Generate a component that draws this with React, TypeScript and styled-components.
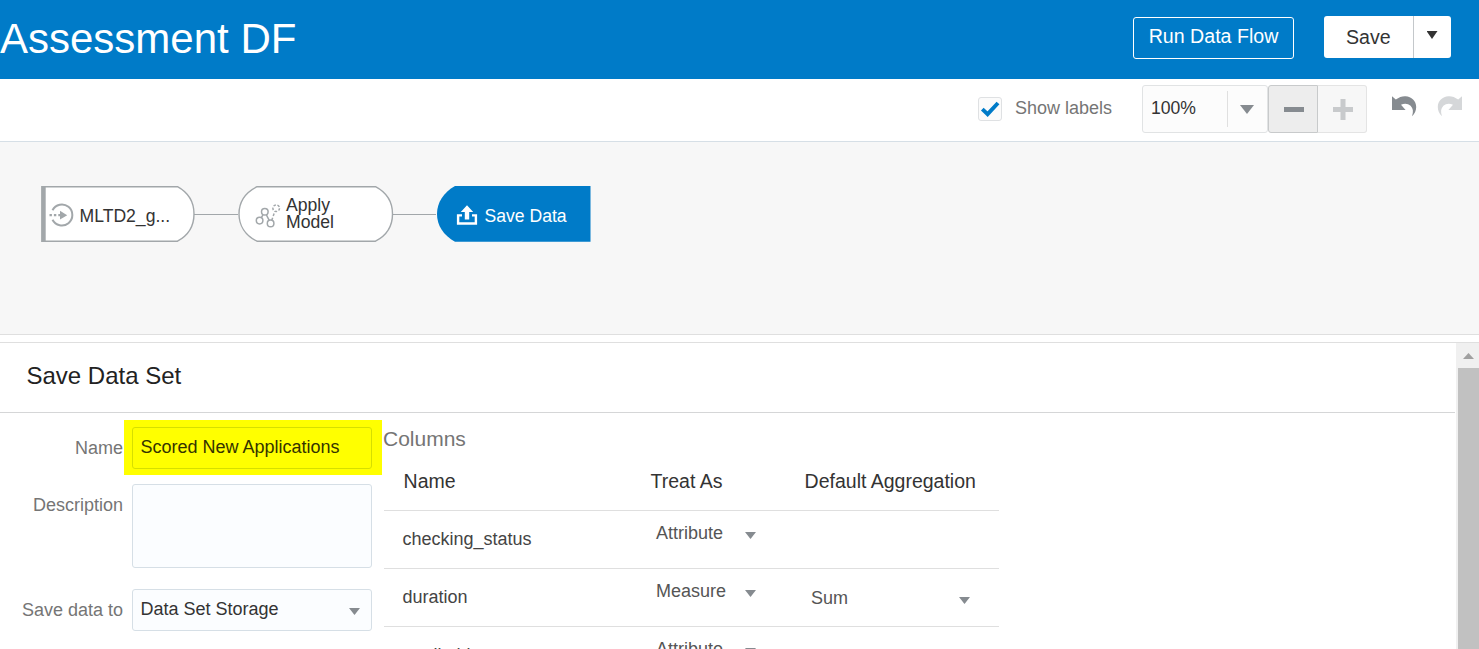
import React from "react";
import styled, { createGlobalStyle } from "styled-components";

const Global = createGlobalStyle`
  * { box-sizing: border-box; }
  body { margin: 0; overflow: hidden; background: #fff; font-family: "Liberation Sans", Arial, sans-serif; }
`;

const Page = styled.div`
  width: 1479px;
  height: 649px;
  overflow: hidden;
  display: flex;
  flex-direction: column;
  font-size: 18px;
  color: #333;
  white-space: nowrap;
`;

const Header = styled.header`
  flex: none;
  height: 79px;
  background: #007bc8;
  display: flex;
  justify-content: space-between;
  align-items: flex-start;
  padding-right: 28px;
`;

const Title = styled.h1`
  margin: 0;
  font-size: 42px;
  font-weight: 400;
  line-height: 77px;
  color: #fff;
`;

const Actions = styled.div`
  display: flex;
  align-items: flex-start;
  gap: 30px;
  padding-top: 16px;
`;

const RunButton = styled.button`
  width: 161px;
  height: 42px;
  margin: 1px 0 0;
  padding: 0 0 4px;
  border: 1px solid #fff;
  border-radius: 3px;
  background: none;
  color: #fff;
  font: 19.6px "Liberation Sans", Arial, sans-serif;
`;

const SplitButton = styled.div`
  display: flex;
  width: 127px;
  height: 42px;
  background: #fff;
  border-radius: 3px;
`;

const SaveLabel = styled.span`
  width: 90px;
  padding-left: 22px;
  border-right: 1px solid #c4c8cb;
  font-size: 19.6px;
  line-height: 42px;
`;

const SaveMenu = styled.span`
  flex: 1;
  display: flex;
  justify-content: center;
  padding: 15px 1px 0 0;
`;

const Arrow = styled.i<{ $w: number; $h: number; $color?: string }>`
  flex: none;
  display: block;
  width: ${(p) => p.$w}px;
  height: ${(p) => p.$h}px;
  background: ${(p) => p.$color || "#868b90"};
  clip-path: polygon(0 0, 100% 0, 50% 100%);
`;

const Toolbar = styled.div`
  flex: none;
  height: 63px;
  border-bottom: 1px solid #d6dfe6;
  display: flex;
  justify-content: flex-end;
  align-items: flex-start;
  padding: 6px 16px 0 0;
`;

const CheckBox = styled.span`
  display: flex;
  width: 24px;
  height: 24px;
  margin-top: 12px;
  border: 1px solid #dfe1e3;
  border-radius: 3px;
  background: #fbfbfb;
`;

const CheckLabel = styled.label`
  width: 127px;
  margin-left: 13px;
  line-height: 46px;
  color: #757575;
`;

const ZoomSelect = styled.div`
  display: flex;
  width: 126px;
  height: 48px;
  border: 1px solid #e1e3e4;
  border-radius: 3px;
  background: #fcfcfc;
`;

const ZoomValue = styled.span`
  width: 85px;
  height: 36px;
  margin-top: 5px;
  padding-left: 8px;
  border-right: 1px solid #e0e0e0;
  line-height: 34px;
  font-size: 17.6px;
`;

const ZoomMenu = styled.span`
  padding: 19px 0 0 12px;
`;

const ZoomButton = styled.button<{ $disabled?: boolean }>`
  display: flex;
  width: ${(p) => (p.$disabled ? 49 : 50)}px;
  height: 48px;
  padding: 0;
  border: 1px solid ${(p) => (p.$disabled ? "#e4e4e4" : "#c8cacb")};
  border-left-width: ${(p) => (p.$disabled ? 0 : 1)}px;
  border-radius: ${(p) => (p.$disabled ? "0 3px 3px 0" : "3px 0 0 3px")};
  background: ${(p) => (p.$disabled ? "#f7f7f7" : "#ededed")};
`;

const History = styled.div`
  display: flex;
  gap: 20px;
  margin: 10px 0 0 24px;
`;

const Canvas = styled.section`
  flex: none;
  height: 193px;
  display: flex;
  align-items: flex-start;
  padding: 43px 0 0 40px;
  background: #f7f7f7;
  border-bottom: 1px solid #dfdfdf;
`;

const Node = styled.div<{ $w: number; $light?: boolean }>`
  position: relative;
  display: flex;
  width: ${(p) => p.$w}px;
  height: 58px;
  font-size: 17.6px;
  color: ${(p) => (p.$light ? "#fff" : "#333")};
`;

const NodeShape = styled.svg`
  position: absolute;
  inset: 0;
`;

const NodeLabel = styled.span<{ $x: number; $y: number; $lh: number }>`
  position: absolute;
  left: ${(p) => p.$x}px;
  top: ${(p) => p.$y}px;
  line-height: ${(p) => p.$lh}px;
  white-space: pre;
`;

const Link = styled.div<{ $w: number }>`
  width: ${(p) => p.$w}px;
  height: 1px;
  margin-top: 29px;
  background: #a2a7aa;
`;

const Panel = styled.section`
  flex: 1;
  min-height: 0;
  display: flex;
  margin-top: 7px;
  border-top: 1px solid #dfdfdf;
`;

const PanelBody = styled.div`
  width: 1455px;
  margin-right: 1px;
`;

const PanelTitle = styled.h2`
  height: 70px;
  margin: 0;
  padding-left: 26.5px;
  border-bottom: 1px solid #d5d6d7;
  font-size: 24px;
  font-weight: 400;
  line-height: 66px;
  color: #222;
`;

const Columns = styled.div`
  display: flex;
  align-items: flex-start;
`;

const Form = styled.div`
  width: 382px;
  padding-top: 14px;
`;

const Field = styled.div<{ $gap: number }>`
  display: flex;
  margin-bottom: ${(p) => p.$gap}px;
`;

const FieldLabel = styled.label`
  width: 123px;
  margin-right: 1px;
  padding-top: 1px;
  text-align: right;
  line-height: 40px;
  color: #757575;
`;

const Highlight = styled.div<{ $on?: boolean }>`
  width: 258px;
  padding: ${(p) => (p.$on ? "7px 10px 6px 8px" : "0 10px 0 8px")};
  margin: ${(p) => (p.$on ? "-7px 0 -6px" : "0")};
  background: ${(p) => (p.$on ? "#ff0" : "none")};
`;

const Box = styled.div<{ $h: number; $on?: boolean }>`
  display: flex;
  justify-content: space-between;
  width: 240px;
  height: ${(p) => p.$h}px;
  padding: 0 11px 0 7.5px;
  border: 1px solid ${(p) => (p.$on ? "#d6df00" : "#d6dfe6")};
  border-radius: 3px;
  background: ${(p) => (p.$on ? "#ff0" : "#fbfdff")};
  color: ${(p) => (p.$on ? "#333300" : "#333")};
  line-height: 38px;
`;

const Down = styled.span<{ $y: number }>`
  padding-top: ${(p) => p.$y}px;
`;

const TableArea = styled.div`
  width: 617px;
  padding-left: 2px;
`;

const TableTitle = styled.h3`
  margin: 0;
  height: 45px;
  margin-left: -1px;
  font-size: 21px;
  font-weight: 400;
  line-height: 52px;
  color: #757575;
`;

const HeadRow = styled.div`
  display: flex;
  height: 53px;
  border-bottom: 1px solid #dfdfdf;
  padding-left: 19.6px;
  font-size: 19.5px;
  line-height: 46px;
  color: #333;
`;

const Row = styled.div`
  display: flex;
  height: 58px;
  border-bottom: 1px solid #dfdfdf;
  padding-left: 18.5px;
`;

const Cell = styled.span<{ $w: number }>`
  width: ${(p) => p.$w}px;
`;

const RowName = styled(Cell)`
  line-height: 56px;
  color: #444;
`;

const RowSelect = styled.span<{ $w: number; $y: number }>`
  display: flex;
  justify-content: space-between;
  width: ${(p) => p.$w}px;
  height: 44px;
  margin-top: ${(p) => p.$y}px;
  line-height: 44px;
  color: #555;
`;

const Scrollbar = styled.div`
  display: flex;
  flex-direction: column;
  width: 23px;
  background: #f0f0f0;
`;

const ScrollUp = styled.div`
  height: 25px;
  padding: 10px 0 0 7px;
`;

const Thumb = styled.div`
  flex: 1;
  margin-left: 2px;
  background: #c1c1c1;
`;

const rows = [
  { name: "checking_status", treat: "Attribute" },
  { name: "duration", treat: "Measure", agg: "Sum" },
  { name: "credit_history", treat: "Attribute" },
];

const UndoIcon = ({ flip }: { flip?: boolean }) => (
  <svg width="26" height="22" viewBox="0 0 26 22">
    <path
      transform={flip ? "translate(26 0) scale(-1 1)" : undefined}
      fill={flip ? "#d5d7d9" : "#868b90"}
      d="M1 1.2 L4.8 4.6 C8 2 11.5 1 14.5 1.2 C20.5 1.5 25.2 5.8 25.2 12 C25.2 15.6 23.8 18.6 21 21.2 C22.6 17 22.2 13.4 19.6 10.8 C17 8.3 13.2 8 10 9.8 L14.6 15 H1 Z"
    />
  </svg>
);

export default function App() {
  return (
    <Page>
      <Global />
      <Header>
        <Title>Assessment DF</Title>
        <Actions>
          <RunButton>Run Data Flow</RunButton>
          <SplitButton>
            <SaveLabel>Save</SaveLabel>
            <SaveMenu><Arrow $w={11} $h={8} $color="#333" /></SaveMenu>
          </SplitButton>
        </Actions>
      </Header>

      <Toolbar>
        <CheckBox>
          <svg width="22" height="22" viewBox="0 0 22 22">
            <path d="M3.3 11.2 L8.6 16.2 L19 5" fill="none" stroke="#007bc8" strokeWidth="3.9" />
          </svg>
        </CheckBox>
        <CheckLabel>Show labels</CheckLabel>
        <ZoomSelect>
          <ZoomValue>100%</ZoomValue>
          <ZoomMenu><Arrow $w={14} $h={9} /></ZoomMenu>
        </ZoomSelect>
        <ZoomButton>
          <svg width="48" height="46"><path d="M15 21h20v5H15z" fill="#868b90" /></svg>
        </ZoomButton>
        <ZoomButton $disabled>
          <svg width="48" height="46"><path d="M15 21h7.5v-8h5v8H35v5h-7.5v8h-5v-8H15z" fill="#c8cacc" /></svg>
        </ZoomButton>
        <History>
          <UndoIcon />
          <UndoIcon flip />
        </History>
      </Toolbar>

      <Canvas>
        <Node $w={154}>
          <NodeShape width="156" height="58" viewBox="40 185 156 58">
            <path d="M42 186.7 H177.5 C188 192.5 194 202.5 194 214 C194 225.5 188 235.5 177.5 241.2 H42" fill="#fff" stroke="#a2a7aa" strokeWidth="1.4" />
            <path d="M43.4 186 V242" stroke="#a2a7aa" strokeWidth="4.6" />
            <path d="M52.5 210.2 A10.5 10.5 0 1 1 52.5 219.8" fill="none" stroke="#a2a7aa" strokeWidth="2" />
            <path d="M49.5 215.2 H60" stroke="#a2a7aa" strokeWidth="2.2" strokeDasharray="2.4 2" />
            <path d="M60 210.8 L67.2 215.2 L60 219.6 Z" fill="#a2a7aa" />
          </NodeShape>
          <NodeLabel $x={39.5} $y={20} $lh={22}>MLTD2_g...</NodeLabel>
        </Node>
        <Link $w={44} />
        <Node $w={154}>
          <NodeShape width="156" height="58" viewBox="238 185 156 58">
            <path d="M257 186.7 H375.5 C386.5 192.5 392.5 202.5 392.5 214 C392.5 225.5 386.5 235.5 375.5 241.2 H257 C245.5 235.5 239 225.5 239 214 C239 202.5 245.5 192.5 257 186.7 Z" fill="#fff" stroke="#a2a7aa" strokeWidth="1.4" />
            <g fill="none" stroke="#a2a7aa" strokeWidth="1.5">
              <circle cx="259.6" cy="220.6" r="3.3" />
              <circle cx="264.8" cy="211.8" r="3.3" />
              <circle cx="270.6" cy="223.4" r="3.3" />
              <path d="M261.3 217.6 L263 214.8 M266.4 214.8 L269.2 220.3" />
              <path d="M271.8 220.2 L274.8 211.5" strokeDasharray="2.6 1.8" />
              <circle cx="276.2" cy="208.2" r="3.3" strokeDasharray="2.5 1.6" />
            </g>
          </NodeShape>
          <NodeLabel $x={48} $y={11.5} $lh={17}>{"Apply\nModel"}</NodeLabel>
        </Node>
        <Link $w={44} />
        <Node $w={154} $light>
          <NodeShape width="156" height="58" viewBox="436 185 156 58">
            <path d="M455 186 H590.5 V241.7 H455 C443.5 235.5 437 225.5 437 214 C437 202.5 443.5 192.5 455 186 Z" fill="#007bc8" />
            <path d="M462 215.4 H458.1 V223.5 H475.9 V215.4 H472" fill="none" stroke="#fff" strokeWidth="2.4" />
            <path d="M467 205.2 L473.2 212 H469.2 V219.5 H464.8 V212 H460.8 Z" fill="#fff" />
          </NodeShape>
          <NodeLabel $x={48.5} $y={20} $lh={22}>Save Data</NodeLabel>
        </Node>
      </Canvas>

      <Panel>
        <PanelBody>
          <PanelTitle>Save Data Set</PanelTitle>
          <Columns>
            <Form>
              <Field $gap={15}>
                <FieldLabel>Name</FieldLabel>
                <Highlight $on><Box $h={42} $on>Scored New Applications</Box></Highlight>
              </Field>
              <Field $gap={21}>
                <FieldLabel>Description</FieldLabel>
                <Highlight><Box $h={84} /></Highlight>
              </Field>
              <Field $gap={0}>
                <FieldLabel>Save data to</FieldLabel>
                <Highlight>
                  <Box $h={42}>
                    Data Set Storage
                    <Down $y={18}><Arrow $w={11} $h={7} /></Down>
                  </Box>
                </Highlight>
              </Field>
            </Form>
            <TableArea>
              <TableTitle>Columns</TableTitle>
              <HeadRow>
                <Cell $w={247}>Name</Cell>
                <Cell $w={154}>Treat As</Cell>
                <Cell $w={180}>Default Aggregation</Cell>
              </HeadRow>
              {rows.map((r) => (
                <Row key={r.name}>
                  <RowName $w={253.5}>{r.name}</RowName>
                  <Cell $w={155}>
                    <RowSelect $w={100} $y={0}>
                      {r.treat}
                      <Down $y={21}><Arrow $w={11} $h={7} /></Down>
                    </RowSelect>
                  </Cell>
                  {r.agg && (
                    <RowSelect $w={159} $y={7}>
                      {r.agg}
                      <Down $y={21}><Arrow $w={11} $h={7} /></Down>
                    </RowSelect>
                  )}
                </Row>
              ))}
            </TableArea>
          </Columns>
        </PanelBody>
        <Scrollbar>
          <ScrollUp>
            <svg width="11" height="6" display="block"><path d="M0 6 L5.5 0 L11 6 Z" fill="#a0a0a0" /></svg>
          </ScrollUp>
          <Thumb />
        </Scrollbar>
      </Panel>
    </Page>
  );
}
